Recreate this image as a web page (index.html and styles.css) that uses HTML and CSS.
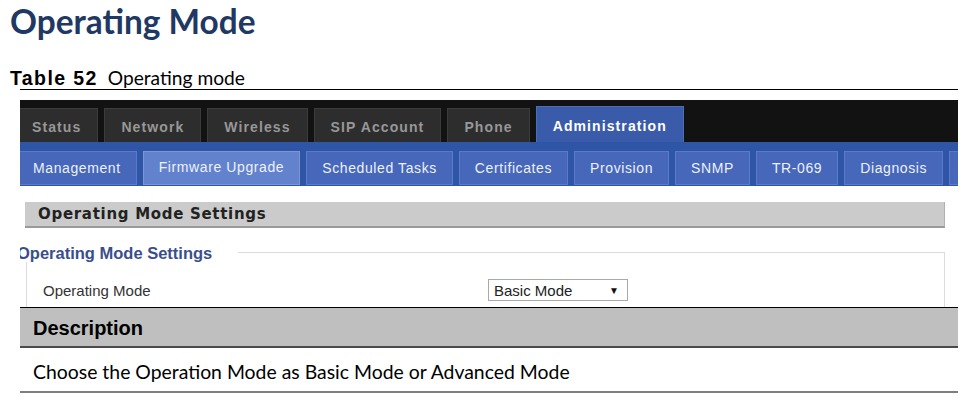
FILE: index.html
```html
<!DOCTYPE html>
<html lang="en">
<head>
    <meta charset="UTF-8">
    <title>Operating Mode</title>
    <link rel="stylesheet" href="styles.css">
</head>
<body>
    <h1 class="title">Operating Mode</h1>
    <p class="caption"><b>Table 52</b> Operating mode</p>
    <div class="doc-table">
        <div class="shot">
            <div class="topbar">
                <span class="tab first">Status</span>
                <span class="tab">Network</span>
                <span class="tab">Wireless</span>
                <span class="tab">SIP Account</span>
                <span class="tab">Phone</span>
                <span class="tab active">Administration</span>
            </div>
            <div class="subbar">
                <span class="subtab first">Management</span>
                <span class="subtab hover">Firmware Upgrade</span>
                <span class="subtab">Scheduled Tasks</span>
                <span class="subtab">Certificates</span>
                <span class="subtab">Provision</span>
                <span class="subtab">SNMP</span>
                <span class="subtab">TR-069</span>
                <span class="subtab">Diagnosis</span>
                <span class="subtab more"></span>
            </div>
            <div class="panel">
                <div class="section-head">Operating Mode Settings</div>
                <div class="group">
                    <div class="group-title">
                        <span class="legend">Operating Mode Settings</span>
                        <span class="rule"></span>
                    </div>
                    <div class="group-body">
                        <div class="row">
                            <span class="label">Operating Mode</span>
                            <div class="select">
                                <span>Basic Mode</span>
                                <span class="arrow">&#9660;</span>
                            </div>
                        </div>
                    </div>
                </div>
            </div>
        </div>
        <div class="desc-head">Description</div>
        <div class="desc-row">Choose the Operation Mode as Basic Mode or Advanced Mode</div>
    </div>
</body>
</html>
```

FILE: styles.css
```css
body {
    margin: 0;
    background: #fff;
    font-family: 'Lato', sans-serif;
    color: #000;
}

.title {
    font-family: 'Lato', sans-serif;
    font-weight: 700;
    font-size: 33.4px;
    line-height: 40px;
    color: #1f3864;
    margin: 1px 0 0 10px;
}

.caption {
    margin: 26px 0 0 10px;
    font-size: 19.2px;
    line-height: 22px;
}

.caption b {
    font-family: 'Liberation Sans', Arial, sans-serif;
    font-size: 19.5px;
    letter-spacing: 1.4px;
    margin-right: 5px;
}

.doc-table {
    margin: 0 17px 0 20px;
    border-top: 1px solid #000;
    padding-top: 10px;
}

/* screenshot of the device web ui */
.shot {
    height: 207px;
    overflow: hidden;
    font-family: 'Liberation Sans', Arial, sans-serif;
}

.topbar {
    background: #121212;
    height: 42px;
    display: flex;
    align-items: flex-end;
    gap: 6px;
}

.tab {
    height: 34px;
    line-height: 36px;
    padding: 0 16px;
    background: #2d2d2d;
    border: 1px solid #3c3c3c;
    border-bottom: none;
    box-sizing: border-box;
    color: #979797;
    font-weight: bold;
    font-size: 14px;
    letter-spacing: 1.1px;
}

.tab.first {
    padding-left: 12px;
    border-left: none;
}

.tab.active {
    height: 36px;
    line-height: 38px;
    background: #3a5ba9;
    border-color: #4c6cbb;
    color: #fff;
}

.subbar {
    background: #2f55a6;
    height: 44px;
    display: flex;
    align-items: flex-end;
    gap: 6px;
    padding-bottom: 1px;
    box-sizing: border-box;
}

.subtab {
    height: 34px;
    line-height: 33px;
    padding: 0 15px;
    background: #4667ba;
    border: 1px solid #5a7acb;
    box-sizing: border-box;
    color: #edf1fa;
    font-size: 14px;
    letter-spacing: 0.6px;
    white-space: nowrap;
}

.subtab.first {
    padding-left: 13px;
    border-left: none;
}

.subtab.hover {
    background: #6282cd;
    border-color: #7a96d6;
    line-height: 31px;
}

.subtab.more {
    width: 40px;
}

.panel {
    padding: 16px 13px 0 5px;
}

.section-head {
    height: 24px;
    line-height: 25px;
    background: #cbcbcb;
    border-bottom: 2px solid #9a9a9a;
    border-right: 1px solid #b0b0b0;
    padding-left: 13px;
    font-family: 'DejaVu Sans', Verdana, sans-serif;
    font-weight: bold;
    font-size: 15px;
    letter-spacing: 0.7px;
    color: #222;
}

.group {
    margin: 16px 0 0 1px;
}

.group-title {
    display: flex;
    align-items: center;
    height: 18px;
    margin-left: -9px;
}

.legend {
    font-weight: bold;
    font-size: 16.5px;
    color: #3b4e8c;
    padding-right: 26px;
}

.rule {
    flex: 1;
    border-top: 1px solid #dcdcdc;
    border-right: 1px solid #dcdcdc;
    height: 9px;
    align-self: flex-end;
}

.group-body {
    border-left: 1px solid #dcdcdc;
    border-right: 1px solid #dcdcdc;
    height: 60px;
}

.row {
    display: grid;
    grid-template-columns: 445px 140px;
    align-items: center;
    padding: 17px 0 0 16px;
}

.label {
    font-size: 15px;
    color: #333;
}

.select {
    height: 22px;
    box-sizing: border-box;
    border: 1px solid #a9a9a9;
    display: flex;
    justify-content: space-between;
    align-items: center;
    padding: 0 8px 0 5px;
    font-size: 15px;
    color: #222;
}

.arrow {
    font-size: 10px;
    color: #111;
}

.desc-head {
    background: #bfbfbf;
    border-top: 1px solid #000;
    border-bottom: 2px solid #4a4a4a;
    height: 38px;
    line-height: 40px;
    padding-left: 13px;
    font-family: 'Liberation Sans', Arial, sans-serif;
    font-weight: bold;
    font-size: 20px;
}

.desc-row {
    height: 43px;
    line-height: 48px;
    padding-left: 13px;
    font-size: 19.4px;
    border-bottom: 2px solid #7f7f7f;
}
```
